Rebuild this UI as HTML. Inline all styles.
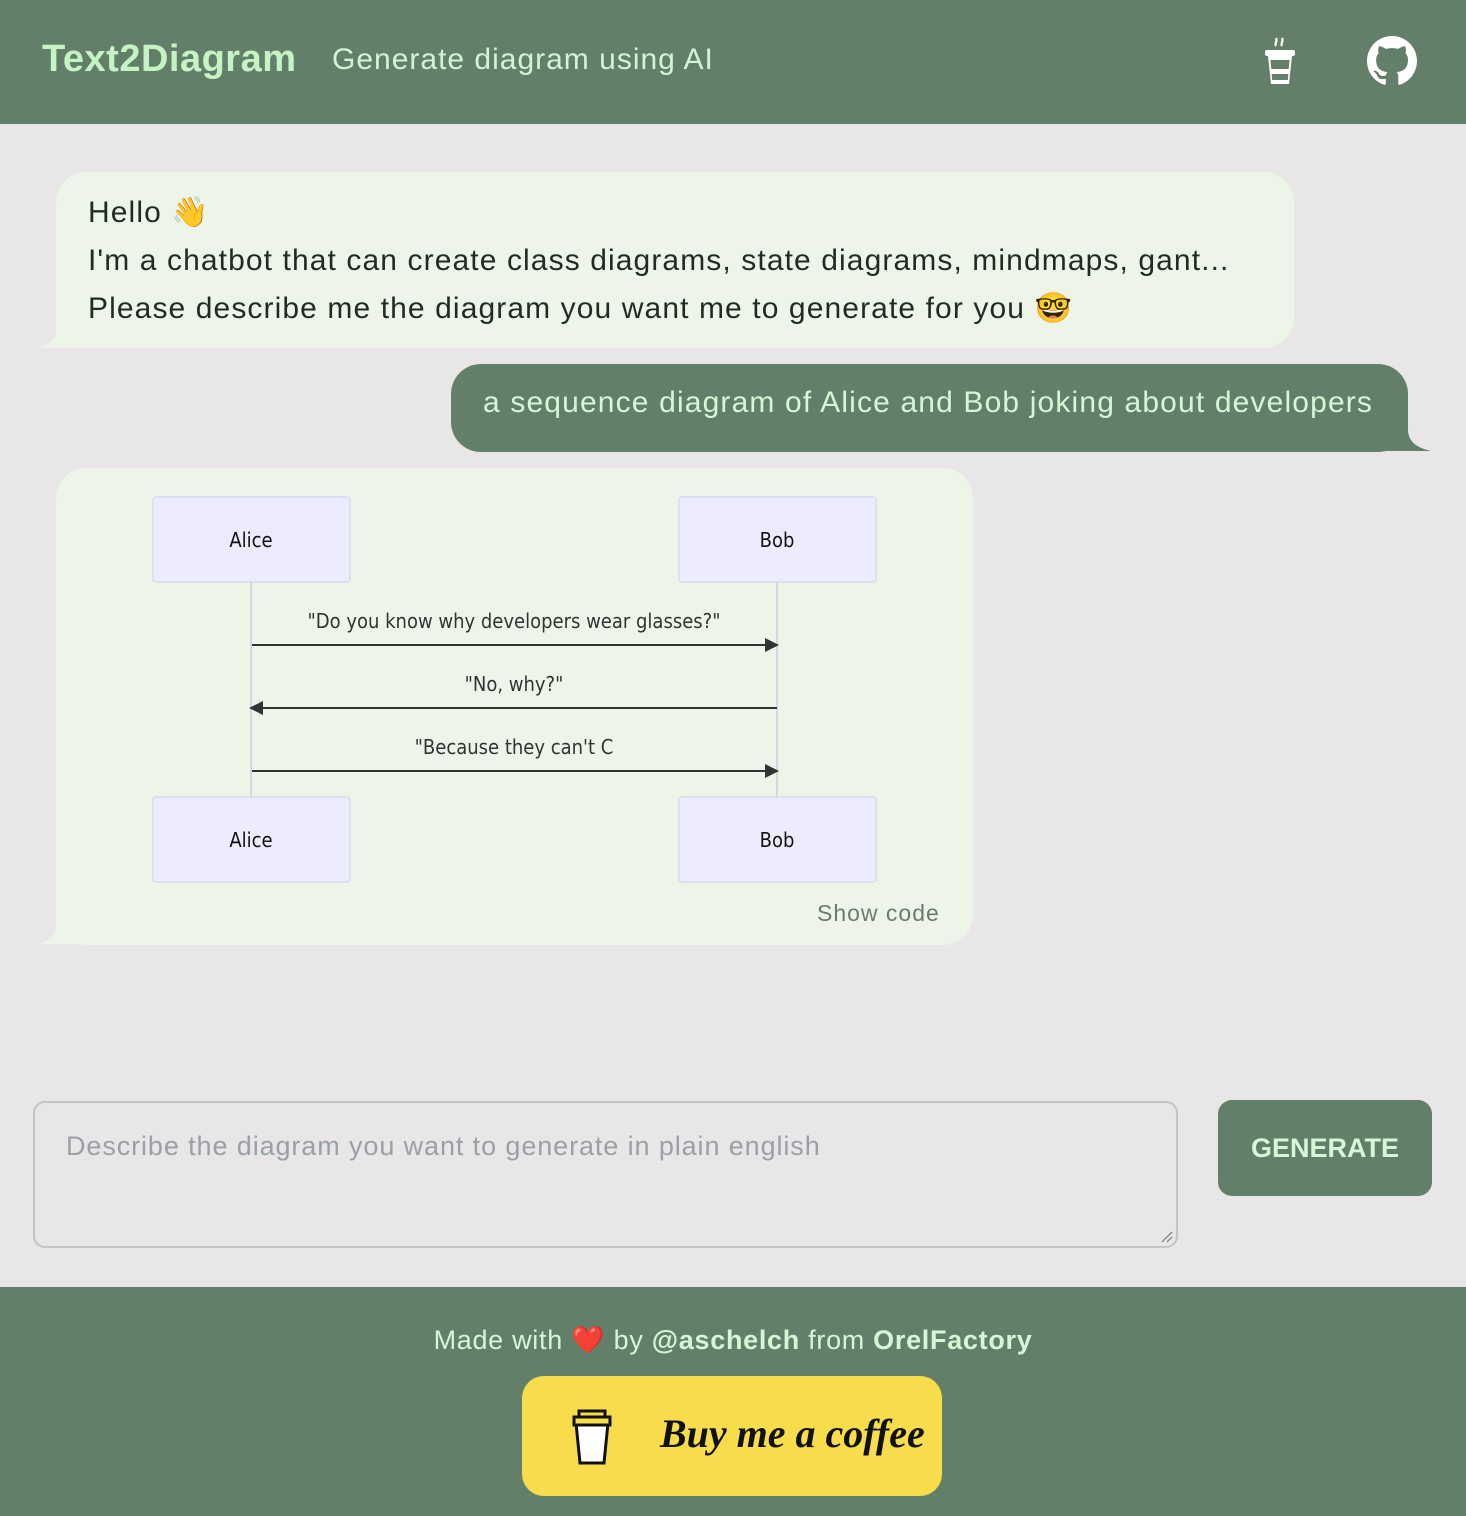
<!DOCTYPE html>
<html><head><meta charset="utf-8"><style>
*{margin:0;padding:0;box-sizing:border-box}
body{width:1466px;height:1516px;background:#e8e6e6;font-family:"Liberation Sans","DejaVu Sans",sans-serif;position:relative;overflow:hidden}
.abs{position:absolute}
header{position:absolute;left:0;top:0;width:1466px;height:124px;background:#637f69}
.title{left:42px;top:38px;font-size:38px;font-weight:bold;color:#c6f3c6;letter-spacing:0.5px}
.sub{left:332px;top:43px;font-size:30px;color:#d3f3d3;letter-spacing:1px}
.bot{font-size:30px;color:#1f2d1f;line-height:48px;letter-spacing:1.1px}
.seq{font-family:"DejaVu Sans Condensed","DejaVu Sans",sans-serif}
footer{position:absolute;left:0;top:1287px;width:1466px;height:229px;background:#637f69}
</style></head><body>
<header>
<div class="abs title">Text2Diagram</div>
<div class="abs sub">Generate diagram using AI</div>
<svg class="abs" style="left:1262px;top:36px" width="36" height="50" viewBox="0 0 36 50">
<path d="M14 10c-2-3 2-4 0-8M20 10c-2-3 2-4 0-8" stroke="#fff" stroke-width="2.2" fill="none"/>
<rect x="3" y="14" width="30" height="6" rx="2" fill="#fff"/>
<path d="M6 20h24l-3 28H9z" fill="#fff"/>
<path d="M8.5 24h19l-0.8 9H9.3z" fill="#637f69"/>
<path d="M9.6 38h16.8l-0.6 6H10.2z" fill="#637f69"/>
</svg>
<svg class="abs" style="left:1367px;top:36px" width="50" height="50" viewBox="0 0 16 16"><path fill="#fff" d="M8 0C3.58 0 0 3.58 0 8c0 3.54 2.29 6.530 5.47 7.59.4.07.55-.17.55-.38 0-.19-.01-.82-.01-1.49-2.01.37-2.53-.49-2.69-.94-.09-.23-.48-.94-.82-1.13-.28-.15-.68-.52-.01-.53.63-.01 1.08.58 1.23.82.72 1.21 1.87.87 2.33.66.07-.52.28-.87.51-1.07-1.78-.2-3.64-.89-3.64-3.95 0-.87.31-1.59.82-2.15-.08-.2-.36-1.02.08-2.12 0 0 .67-.21 2.2.82.64-.18 1.32-.27 2-.27.68 0 1.36.09 2 .27 1.53-1.04 2.2-.82 2.2-.82.44 1.1.16 1.92.08 2.12.51.56.82 1.27.82 2.15 0 3.07-1.87 3.75-3.65 3.95.29.25.54.73.54 1.48 0 1.07-.01 1.93-.01 2.2 0 .21.15.46.55.38A8.013 8.013 0 0016 8c0-4.42-3.58-8-8-8z"/></svg>
</header>

<!-- bubble 1 -->
<div class="abs" style="left:56px;top:172px;width:1238px;height:176px;background:#edf4e8;border-radius:30px"></div>
<svg class="abs" style="left:30px;top:300px" width="80" height="50"><path d="M26 0 V30 Q26 44 5 48 H80 V0Z" fill="#edf4e8"/></svg>
<div class="abs bot" style="left:88px;top:189px">Hello 👋<br>I'm a chatbot that can create class diagrams, state diagrams, mindmaps, gant...<br>Please describe me the diagram you want me to generate for you 🤓</div>

<!-- user bubble -->
<div class="abs" style="left:451px;top:364px;width:957px;height:88px;background:#637f69;border-radius:30px"></div>
<svg class="abs" style="left:1360px;top:400px" width="80" height="52"><path d="M48 0 V30 Q48 46 71 51 H0 V0Z" fill="#637f69"/></svg>
<div class="abs" style="left:483px;top:386px;font-size:30px;color:#d6f6d6;letter-spacing:1.15px">a sequence diagram of Alice and Bob joking about developers</div>

<!-- diagram bubble -->
<div class="abs" style="left:56px;top:468px;width:917px;height:477px;background:#edf4e8;border-radius:30px"></div>
<svg class="abs" style="left:30px;top:896px" width="80" height="50"><path d="M26 0 V30 Q26 44 5 48 H80 V0Z" fill="#edf4e8"/></svg>
<svg class="abs seq" style="left:0;top:0" width="1000" height="950">
<line x1="251" y1="582" x2="251" y2="797" stroke="#cfcbe6" stroke-width="1.5"/>
<line x1="777" y1="582" x2="777" y2="797" stroke="#cfcbe6" stroke-width="1.5"/>
<rect x="153" y="497" width="197" height="85" rx="3" fill="#ececfe" stroke="#d4cfee"/>
<rect x="679" y="497" width="197" height="85" rx="3" fill="#ececfe" stroke="#d4cfee"/>
<rect x="153" y="797" width="197" height="85" rx="3" fill="#ececfe" stroke="#d4cfee"/>
<rect x="679" y="797" width="197" height="85" rx="3" fill="#ececfe" stroke="#d4cfee"/>
<g font-size="20" fill="#111" text-anchor="middle">
<text x="251" y="547">Alice</text><text x="777" y="547">Bob</text>
<text x="251" y="847">Alice</text><text x="777" y="847">Bob</text>
<text x="514" y="628" fill="#333">"Do you know why developers wear glasses?"</text>
<text x="514" y="691" fill="#333">"No, why?"</text>
<text x="514" y="754" fill="#333">"Because they can't C</text>
</g>
<g stroke="#333" stroke-width="2">
<line x1="252" y1="645" x2="768" y2="645"/><line x1="262" y1="708" x2="777" y2="708"/><line x1="252" y1="771" x2="768" y2="771"/></g>
<g fill="#333"><path d="M765 638l14 7-14 7z"/><path d="M263 701l-14 7 14 7z"/><path d="M765 764l14 7-14 7z"/></g>
</svg>
<div class="abs" style="left:817px;top:900px;font-size:23px;color:#6f7a6f;letter-spacing:1px">Show code</div>

<!-- input -->
<div class="abs" style="left:33px;top:1101px;width:1145px;height:147px;border:2px solid #c4c4c4;border-radius:12px"></div>
<div class="abs" style="left:66px;top:1131px;font-size:27px;color:#9aa0a8;letter-spacing:0.9px">Describe the diagram you want to generate in plain english</div>
<svg class="abs" style="left:1160px;top:1230px" width="14" height="14"><path d="M2 12L12 2M7 12L12 7" stroke="#777" stroke-width="1.2"/></svg>
<div class="abs" style="left:1218px;top:1100px;width:214px;height:96px;background:#637f69;border-radius:14px;color:#d6f6d6;font-size:27px;font-weight:bold;text-align:center;line-height:96px">GENERATE</div>

<footer>
<div class="abs" style="left:0;width:1466px;top:37px;text-align:center;font-size:27px;color:#d6f6d6;letter-spacing:0.7px">Made with ❤️ by <b>@aschelch</b> from <b>OrelFactory</b></div>
<div class="abs" style="left:522px;top:89px;width:420px;height:120px;background:#f7dd4c;border-radius:22px"></div>
<svg class="abs" style="left:570px;top:120px" width="44" height="60" viewBox="0 0 44 60">
<path d="M6 16h32l-4 40H10z" fill="#fff" stroke="#111" stroke-width="3"/>
<path d="M4 10h36v8H4z" fill="#f7dd4c" stroke="#111" stroke-width="3"/>
<path d="M9 4h26v6H9z" fill="#f7dd4c" stroke="#111" stroke-width="3"/>
</svg>
<div class="abs" style="left:660px;top:123px;font-family:'Liberation Serif',serif;font-style:italic;font-weight:bold;font-size:40px;color:#111">Buy me a coffee</div>
</footer>
</body></html>
